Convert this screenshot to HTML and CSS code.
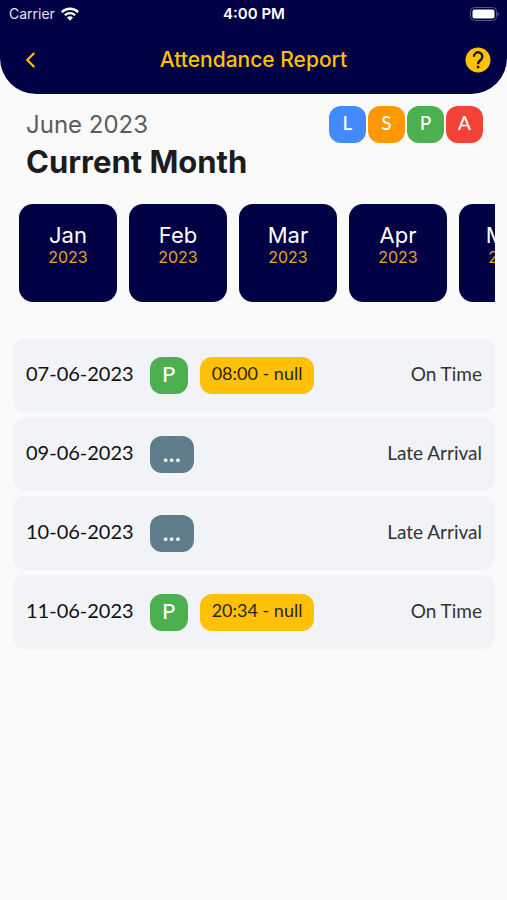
FILE: index.html
```html
<!DOCTYPE html>
<html lang="en">
<head>
<meta charset="utf-8">
<meta name="viewport" content="width=device-width, initial-scale=1">
<title>Attendance Report</title>
<link rel="stylesheet" href="styles.css">
</head>
<body>
<header class="header">
  <div class="status">
    <div class="carrier">Carrier
      <svg width="18" height="14" viewBox="0 0 18 14" fill="none" stroke="#fff" stroke-width="2.3" aria-hidden="true"><path d="M.8 5.1a11.7 11.7 0 0 1 16.4 0M3.8 8.3a7.4 7.4 0 0 1 10.4 0"/><path d="M6 10.6a4.3 4.3 0 0 1 6 0L9 13.8z" fill="#fff" stroke="none"/></svg>
    </div>
    <div class="clock">4:00 PM</div>
    <svg class="battery" width="30" height="14" viewBox="0 0 30 14" aria-hidden="true"><rect x="1.5" y=".5" width="26" height="13" rx="4" fill="none" stroke="#55558a"/><rect x="3.5" y="2.5" width="22" height="9" rx="2" fill="#fff"/><path d="M28.5 5c2 .6 2 3.4 0 4z" fill="#55558a"/></svg>
  </div>
  <nav class="bar">
    <button class="icon-button back" type="button" aria-label="Back"><svg width="12" height="18" viewBox="0 0 12 18" fill="none" stroke="#ffc107" stroke-width="2.2"><path d="M10.3 2 3.3 9l7 7"/></svg></button>
    <h1 class="title">Attendance Report</h1>
    <button class="icon-button help" type="button" aria-label="Help"><svg width="26" height="26" viewBox="0 0 26 26"><circle cx="13" cy="13" r="12.5" fill="#ffc107"/><path d="M8.9 9.7a4.2 4.2 0 1 1 7.1 2.9c-1.5 1.4-2.9 2.1-2.9 4.6" fill="none" stroke="#1c1a10" stroke-width="2.4"/><rect x="11.8" y="18.8" width="2.5" height="2.5" fill="#1c1a10"/></svg></button>
  </nav>
</header>
<main class="main">
  <section class="summary">
    <div>
      <p class="period">June 2023</p>
      <h2 class="heading">Current Month</h2>
    </div>
    <div class="legend">
      <span class="key blue">L</span><span class="key orange">S</span><span class="key green">P</span><span class="key red">A</span>
    </div>
  </section>
  <div class="months">
    <button class="month" type="button">Jan<span class="year">2023</span></button>
    <button class="month" type="button">Feb<span class="year">2023</span></button>
    <button class="month" type="button">Mar<span class="year">2023</span></button>
    <button class="month" type="button">Apr<span class="year">2023</span></button>
    <button class="month" type="button">May<span class="year">2023</span></button>
  </div>
  <ul class="records">
    <li class="record"><span class="date">07-06-2023</span><span class="mark green">P</span><span class="time">08:00 - null</span><span class="state">On Time</span></li>
    <li class="record"><span class="date">09-06-2023</span><span class="mark slate">...</span><span class="state">Late Arrival</span></li>
    <li class="record"><span class="date">10-06-2023</span><span class="mark slate">...</span><span class="state">Late Arrival</span></li>
    <li class="record"><span class="date">11-06-2023</span><span class="mark green">P</span><span class="time">20:34 - null</span><span class="state">On Time</span></li>
  </ul>
</main>
</body>
</html>
```
FILE: styles.css
```css
* { box-sizing: border-box; }
body { margin: 0; background: #fafafa; color: #1c1c1e; font-family: Inter, sans-serif; }
h1, h2, p, ul { margin: 0; padding: 0; }
button { border: 0; padding: 0; font: inherit; cursor: pointer; }
svg { display: block; }

.header { background: #000045; border-radius: 0 0 36px 36px; padding-bottom: 2px; }
.status { display: grid; grid-template-columns: 1fr auto 1fr; align-items: center; height: 27px; padding: 0 8px 0 9px; color: #fff; font-size: 14px; }
.carrier { display: flex; align-items: center; gap: 6px; color: #e4e4f0; }
.clock { font-size: 15px; font-weight: 600; }
.battery { justify-self: end; }
.bar { display: grid; grid-template-columns: 1fr auto 1fr; align-items: center; height: 65px; padding: 0 16px; }
.icon-button { justify-self: start; background: none; }
.back { padding-left: 8px; }
.help { justify-self: end; }
.title { color: #ffc107; font-size: 21px; font-weight: 500; line-height: 28px; }

.main { padding: 12px 12px 24px 13px; }
.summary { display: flex; justify-content: space-between; align-items: flex-start; padding: 0 12px 0 13px; }
.period { font-size: 24px; line-height: 37px; color: #5c5c5c; }
.heading { font-size: 31px; line-height: 37px; font-weight: 700; }
.legend { display: flex; gap: 2px; }
.key { width: 37px; height: 37px; border-radius: 12px; color: #fff; font: 500 19px/34px Lato, sans-serif; text-align: center; }
.blue { background: #448aff; }
.orange { background: #ff9800; }
.green { background: #4caf50; }
.red { background: #f44336; }
.slate { background: #607d8b; }

.months { display: flex; gap: 12px; margin-top: 24px; padding-left: 6px; overflow: hidden; }
.month { display: flex; flex-direction: column; align-items: center; flex: none; width: 98px; height: 98px; padding-top: 18px; border-radius: 14px; background: #000045; color: #fff; font-size: 22px; line-height: 26px; }
.year { color: #e5a823; font-size: 16px; line-height: 18px; }

.records { list-style: none; display: grid; gap: 5px; margin-top: 36px; font-family: Lato, sans-serif; }
.record { display: flex; align-items: center; height: 74px; padding: 0 13px; border-radius: 12px; background: #f2f3f7; }
.date, .state { padding-bottom: 4px; }
.date { font-size: 20px; color: #111; }
.mark, .time { height: 37px; padding: 0 12px; border-radius: 12px; line-height: 33px; }
.mark { min-width: 38px; margin-left: 16px; color: #fff; font-size: 22px; font-weight: 500; text-align: center; }
.slate { min-width: 44px; font-size: 26px; }
.time { margin-left: 12px; background: #ffc107; color: #2b250d; font-size: 18px; }
.state { margin-left: auto; font-size: 19px; color: #333; }
```
